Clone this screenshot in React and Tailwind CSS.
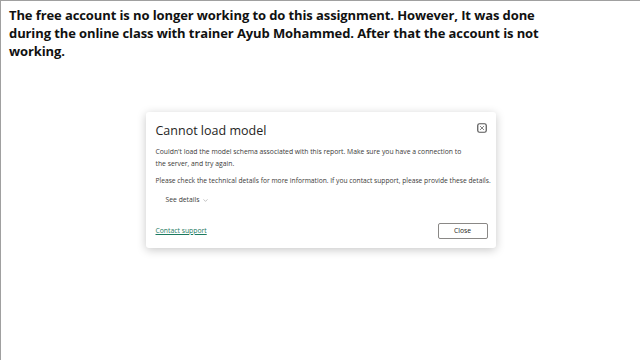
import { ChevronDown } from "lucide-react";

function CloseIcon() {
  return (
    <svg width="10" height="10" viewBox="0 0 10 10" fill="none">
      <rect x="0.75" y="0.75" width="8.5" height="8.5" rx="1.8" stroke="#555" strokeWidth="1.2" />
      <path d="M3.3 3.3 L6.7 6.7 M6.7 3.3 L3.3 6.7" stroke="#777" strokeWidth="0.9" strokeLinecap="round" />
    </svg>
  );
}

function ErrorDialog() {
  return (
    <div className="mx-auto w-[350px] rounded-[3px] bg-white pl-[10px] pr-[4px] pt-[10px] pb-[9px] shadow-[0_2px_10px_rgba(0,0,0,0.22)]">
      <div className="flex items-start justify-between pr-[4px]">
        <h2 className="text-[12.5px] leading-[18px] font-medium text-[#252423]">
          Cannot load model
        </h2>
        <button className="mt-[1px] mr-[1px]">
          <CloseIcon />
        </button>
      </div>

      <p className="mt-[6px] pr-[20px] text-[6.8px] leading-[12px] text-[#3b3a39]">
        Couldn't load the model schema associated with this report. Make sure you have a connection to the server, and try again.
      </p>

      <p className="mt-[5px] whitespace-nowrap text-[6.7px] leading-[12px] text-[#3b3a39]">
        Please check the technical details for more information. If you contact support, please provide these details.
      </p>

      <div className="mt-[7px] flex items-center gap-[3px] pl-[10px] text-[6.8px] leading-[12px] text-[#3b3a39]">
        <span>See details</span>
        <ChevronDown size={7} strokeWidth={1.5} className="text-[#777]" />
      </div>

      <div className="mt-[17px] flex items-center justify-between pr-[4px]">
        <a href="#" className="text-[6.8px] leading-[12px] text-[#1d7a5f] underline">
          Contact support
        </a>
        <button className="h-[16px] w-[50px] rounded-[2px] border border-[#8a8886] bg-white text-[6.8px] font-medium text-[#252423]">
          Close
        </button>
      </div>
    </div>
  );
}

export default function App() {
  return (
    <div
      className="h-[360px] w-[640px] overflow-hidden border-t border-l border-[#a0a0a0] bg-white"
      style={{ fontFamily: '"Open Sans", "Noto Sans", sans-serif' }}
    >
      <p className="w-[552px] pl-[8px] pt-[5px] text-[13px] leading-[18px] font-bold tracking-[-0.1px] text-[#111]">
        The free account is no longer working to do this assignment. However, It was done during the online class with trainer Ayub Mohammed. After that the account is not working.
      </p>
      <div className="mt-[52px]">
        <ErrorDialog />
      </div>
    </div>
  );
}
